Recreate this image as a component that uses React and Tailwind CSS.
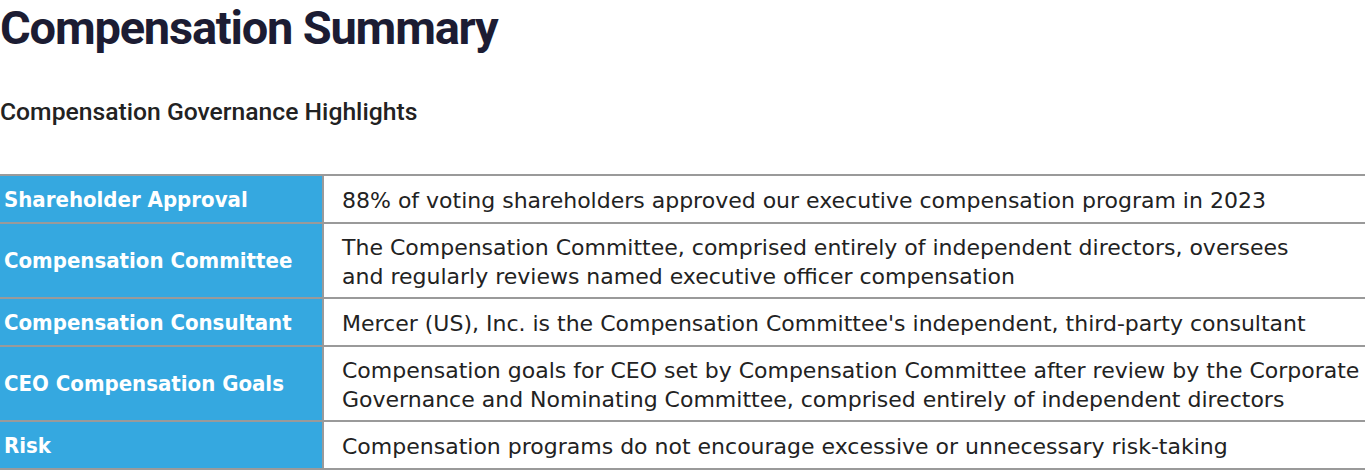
import React from 'react';

const rows = [
  {
    label: 'Shareholder Approval',
    text: ['88% of voting shareholders approved our executive compensation program in 2023'],
  },
  {
    label: 'Compensation Committee',
    text: [
      'The Compensation Committee, comprised entirely of independent directors, oversees',
      'and regularly reviews named executive officer compensation',
    ],
  },
  {
    label: 'Compensation Consultant',
    text: ["Mercer (US), Inc. is the Compensation Committee's independent, third-party consultant"],
  },
  {
    label: 'CEO Compensation Goals',
    text: [
      'Compensation goals for CEO set by Compensation Committee after review by the Corporate',
      'Governance and Nominating Committee, comprised entirely of independent directors',
    ],
  },
  {
    label: 'Risk',
    text: ['Compensation programs do not encourage excessive or unnecessary risk-taking'],
  },
];

export default function App() {
  return (
    <div className="w-[1366px] h-[472px] bg-white overflow-hidden font-['Roboto',sans-serif]">
      <h1 className="text-[47px] leading-[56px] font-bold tracking-[-1.2px] text-[#1c1c33]">
        Compensation Summary
      </h1>
      <h2 className="mt-[41px] text-[24.7px] leading-[30px] font-medium text-[#222]">
        Compensation Governance Highlights
      </h2>
      <div className="mt-[47px] w-[1365px] border-t-2 border-[#9a9a9a]">
        {rows.map((row) => (
          <div key={row.label} className="grid grid-cols-[324px_1fr] border-b-2 border-[#9a9a9a]">
            <div className="flex items-center pl-[4px] bg-[#35a8e0] border-r-2 border-[#9a9a9a] text-white font-bold text-[22px] font-['DejaVu_Sans_Condensed','DejaVu_Sans',sans-serif]">
              {row.label}
            </div>
            <div
              className={`pl-[18px] text-[22px] leading-[29px] text-[#222] font-['DejaVu_Sans',sans-serif] ${
                row.text.length > 1 ? 'pt-[8.5px] pb-[6.5px]' : 'pt-[9.5px] pb-[7.5px]'
              }`}
            >
              {row.text.map((line) => (
                <div key={line} className="whitespace-nowrap">{line}</div>
              ))}
            </div>
          </div>
        ))}
      </div>
    </div>
  );
}
